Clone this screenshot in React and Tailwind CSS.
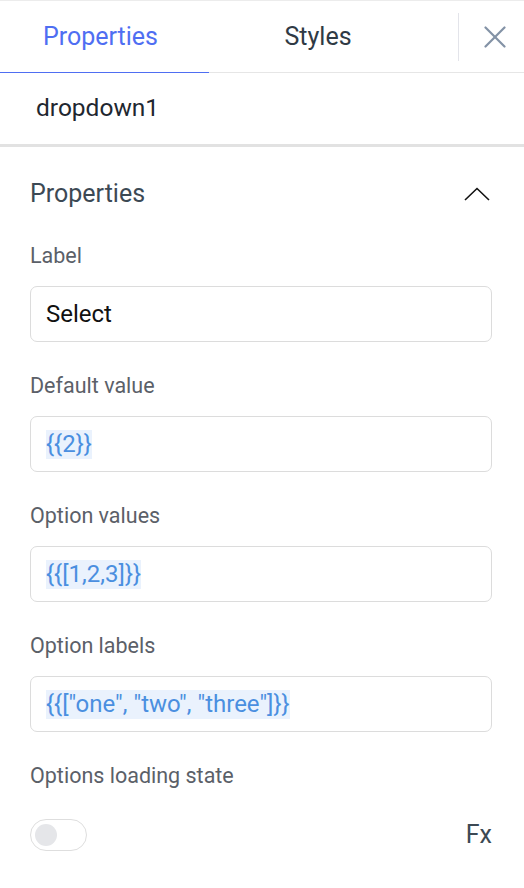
import React from 'react';

const fields = [
  { label: 'Default value', code: '{{2}}' },
  { label: 'Option values', code: '{{[1,2,3]}}' },
  { label: 'Option labels', code: '{{["one", "two", "three"]}}' },
];

const App = () => {
  return (
    <div className="w-[524px] h-[888px] bg-white border-t border-[#ececec] font-['Roboto',sans-serif] overflow-hidden">
      {/* tabs */}
      <div className="flex h-[72px]">
        <div className="w-[209px] flex items-center justify-center pr-[8px] border-b border-[#4f6ef2] text-[25px] text-[#4f6ef2]">
          Properties
        </div>
        <div className="w-[218px] flex items-center justify-center border-b border-[#e6e6e6] text-[25px] text-[#2f3a45]">
          Styles
        </div>
        <div className="flex-1 flex items-center border-b border-[#e6e6e6]">
          <div className="ml-[31px] h-[48px] w-px bg-[#e3e4ea]" />
          <div className="ml-[25px]">
            <svg width="22" height="22" viewBox="0 0 22 22" fill="none" stroke="#8392a6" strokeWidth="2.2" strokeLinecap="round">
              <line x1="1.5" y1="1.5" x2="20.5" y2="20.5" />
              <line x1="20.5" y1="1.5" x2="1.5" y2="20.5" />
            </svg>
          </div>
        </div>
      </div>

      {/* component name */}
      <div className="h-[74px] flex items-center pl-[36px] border-b-[3px] border-[#e2e2e2] text-[24.5px] text-[#1f2730]">
        dropdown1
      </div>

      {/* section */}
      <div className="pl-[30px] pr-[32px] pt-[33px]">
        <div className="flex items-center justify-between h-[28px]">
          <span className="text-[25px] text-[#3c4954]">Properties</span>
          <svg width="26" height="14" viewBox="0 0 26 14" fill="none" stroke="#111" strokeWidth="1.6" className="mr-[2px]">
            <polyline points="1,13 13,1.5 25,13" />
          </svg>
        </div>

        <div className="mt-[36px] text-[21.5px] leading-[24px] text-[#5b6068]">Label</div>
        <div className="mt-[18px] h-[56px] rounded-[7px] border border-[#dcdcdc] flex items-center pl-[15px] text-[24px] text-[#111]">
          Select
        </div>

        {fields.map(f => (
          <div key={f.label}>
            <div className="mt-[32px] text-[21.5px] leading-[24px] text-[#5b6068]">{f.label}</div>
            <div className="mt-[18px] h-[56px] rounded-[7px] border border-[#dcdcdc] flex items-center pl-[15px]">
              <span className="bg-[#eaf2fd] text-[#4a8fe0] text-[24px] leading-[29px]">{f.code}</span>
            </div>
          </div>
        ))}

        <div className="mt-[32px] text-[21.5px] leading-[24px] text-[#5b6068]">Options loading state</div>
        <div className="mt-[28px] flex items-center justify-between">
          <div className="w-[57px] h-[32px] rounded-full border border-[#dedede] flex items-center pl-[4px]">
            <div className="w-[22px] h-[22px] rounded-full bg-[#e5e6e9]" />
          </div>
          <span className="text-[25px] text-[#3c4954]">Fx</span>
        </div>
      </div>
    </div>
  );
};

export default App;
